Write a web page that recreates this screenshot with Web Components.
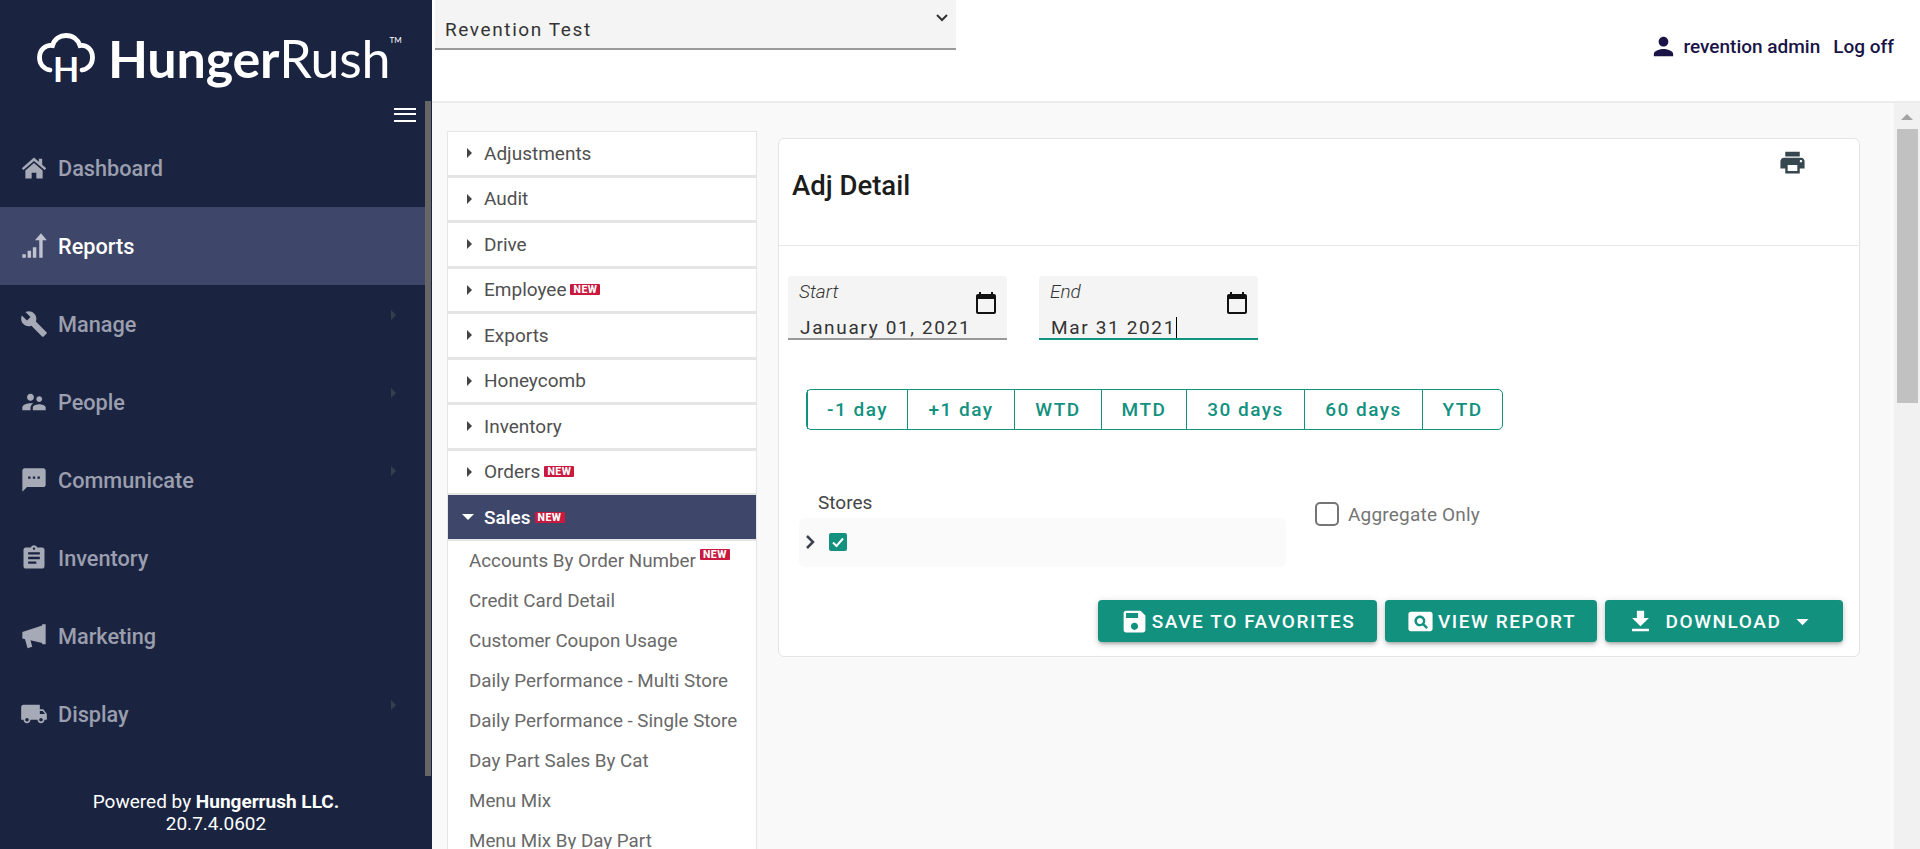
<!DOCTYPE html>
<html lang="en">
<head>
<meta charset="utf-8">
<title>Adj Detail</title>
<style>
  html, body { margin: 0; height: 100%; overflow: hidden; }
  body { display: flex; font-family: Roboto, "Liberation Sans", sans-serif; background: #f9f9f9; }
  hr-main { flex: 1; min-width: 0; }
</style>
</head>
<body>
<hr-sidebar>
  <hr-nav-item icon="home">Dashboard</hr-nav-item>
  <hr-nav-item icon="reports" active>Reports</hr-nav-item>
  <hr-nav-item icon="wrench" arrow>Manage</hr-nav-item>
  <hr-nav-item icon="people" arrow>People</hr-nav-item>
  <hr-nav-item icon="sms" arrow>Communicate</hr-nav-item>
  <hr-nav-item icon="clipboard">Inventory</hr-nav-item>
  <hr-nav-item icon="bullhorn">Marketing</hr-nav-item>
  <hr-nav-item icon="truck" arrow>Display</hr-nav-item>
</hr-sidebar>

<hr-main>
  <hr-accordion slot="menu">
    <hr-group>Adjustments</hr-group>
    <hr-group>Audit</hr-group>
    <hr-group>Drive</hr-group>
    <hr-group badge>Employee</hr-group>
    <hr-group>Exports</hr-group>
    <hr-group>Honeycomb</hr-group>
    <hr-group>Inventory</hr-group>
    <hr-group badge>Orders</hr-group>
    <hr-group badge open>Sales
      <hr-link slot="links" badge>Accounts By Order Number</hr-link>
      <hr-link slot="links">Credit Card Detail</hr-link>
      <hr-link slot="links">Customer Coupon Usage</hr-link>
      <hr-link slot="links">Daily Performance - Multi Store</hr-link>
      <hr-link slot="links">Daily Performance - Single Store</hr-link>
      <hr-link slot="links">Day Part Sales By Cat</hr-link>
      <hr-link slot="links">Menu Mix</hr-link>
      <hr-link slot="links">Menu Mix By Day Part</hr-link>
    </hr-group>
  </hr-accordion>
  <hr-report-card slot="report" heading="Adj Detail"></hr-report-card>
</hr-main>

<script>
const ICONS = {
  home: "M12 3 1.5 12.3l1.4 1.5L12 5.9l9.1 7.9 1.4-1.5L19 9.2V4h-2.8v2.7ZM4.6 14.2 12 7.8l7.4 6.4V21H14v-5h-4v5H4.6Z",
  reports: "M2 19h3v3H2Zm4.5-3h3v6h-3Zm4.5-3h3v9h-3Zm5.5-6h-3.7L18 1l5 6h-3.6v15h-2.9Z",
  wrench: "M22.7 19l-9.1-9.1c.9-2.3.4-5-1.5-6.9-2-2-5-2.4-7.4-1.3L9 6 6 9 1.6 4.7C.4 7.1.9 10.1 2.9 12.1c1.9 1.9 4.6 2.4 6.9 1.5l9.1 9.1c.4.4 1 .4 1.4 0l2.3-2.3c.5-.4.5-1.1.1-1.4z",
  people: "M16.5 12c1.38 0 2.49-1.12 2.49-2.5S17.88 7 16.5 7C15.12 7 14 8.12 14 9.5s1.12 2.5 2.5 2.5zM9 11c1.66 0 2.99-1.34 2.99-3S10.66 5 9 5C7.34 5 6 6.34 6 8s1.34 3 3 3zm7.5 3c-1.83 0-5.5.92-5.5 2.75V19h11v-2.25c0-1.83-3.67-2.75-5.5-2.75zM9 13c-2.33 0-7 1.17-7 3.5V19h7v-2.25c0-.85.33-2.34 2.37-3.47C10.5 13.1 9.66 13 9 13z",
  sms: "M20 2H4c-1.1 0-1.99.9-1.99 2L2 22l4-4h14c1.1 0 2-.9 2-2V4c0-1.1-.9-2-2-2zM9 11H7V9h2v2zm4 0h-2V9h2v2zm4 0h-2V9h2v2z",
  clipboard: "M19 3h-4.18C14.4 1.84 13.3 1 12 1c-1.3 0-2.4.84-2.82 2H5c-1.1 0-2 .9-2 2v14c0 1.1.9 2 2 2h14c1.1 0 2-.9 2-2V5c0-1.1-.9-2-2-2zm-7 0c.55 0 1 .45 1 1s-.45 1-1 1-1-.45-1-1 .45-1 1-1zm2 14H7v-2h7v2zm3-4H7v-2h10v2zm0-4H7V7h10v2z",
  bullhorn: "M2 8.5 19 3V2h3v17h-3v-1l-10-2.3 1.5 5.6-4 1.2L4.3 14.8 2 14.2Z",
  truck: "M20 8h-3V4H3c-1.1 0-2 .9-2 2v11h2c0 1.66 1.34 3 3 3s3-1.34 3-3h6c0 1.66 1.34 3 3 3s3-1.34 3-3h2v-5l-3-4zM6 18.5c-.83 0-1.5-.67-1.5-1.5s.67-1.5 1.5-1.5 1.5.67 1.5 1.5-.67 1.5-1.5 1.5zm13.5-9l1.96 2.5H17V9.5h2.5zm-1.5 9c-.83 0-1.5-.67-1.5-1.5s.67-1.5 1.5-1.5 1.5.67 1.5 1.5-.67 1.5-1.5 1.5z",
  person: "M12 12c2.21 0 4-1.79 4-4s-1.79-4-4-4-4 1.79-4 4 1.79 4 4 4zm0 2c-2.67 0-8 1.34-8 4v2h16v-2c0-2.66-5.33-4-8-4z",
  print: "M19 8H5c-1.66 0-3 1.34-3 3v6h4v4h12v-4h4v-6c0-1.66-1.34-3-3-3zm-3 11H8v-5h8v5zm3-7c-.55 0-1-.45-1-1s.45-1 1-1 1 .45 1 1-.45 1-1 1zm-1-9H6v4h12V3z",
  calendar: "M20 3h-1V1h-2v2H7V1H5v2H4c-1.1 0-2 .9-2 2v16c0 1.1.9 2 2 2h16c1.1 0 2-.9 2-2V5c0-1.1-.9-2-2-2zm0 18H4V8h16v13z",
  save: "M17 3H5c-1.11 0-2 .9-2 2v14c0 1.1.89 2 2 2h14c1.1 0 2-.9 2-2V7l-4-4zm-5 16c-1.66 0-3-1.34-3-3s1.34-3 3-3 3 1.34 3 3-1.34 3-3 3zm3-10H5V5h10v4z",
  pageview: "M11.5 9C10.12 9 9 10.12 9 11.5s1.12 2.5 2.5 2.5 2.5-1.12 2.5-2.5S12.88 9 11.5 9zM20 4H4c-1.1 0-2 .9-2 2v12c0 1.1.9 2 2 2h16c1.1 0 2-.9 2-2V6c0-1.1-.9-2-2-2zm-3.21 14.21l-2.91-2.91c-.69.44-1.51.7-2.38.7C9.01 16 7 13.99 7 11.5S9.01 7 11.5 7 16 9.01 16 11.5c0 .88-.26 1.69-.7 2.39l2.91 2.9-1.42 1.42z",
  download: "M19 9h-4V3H9v6H5l7 7 7-7zM5 18v2h14v-2H5z",
  dropdown: "M7 10l5 5 5-5z"
};

class HrIcon extends HTMLElement {
  constructor() {
    super();
    this.attachShadow({ mode: "open" });
  }

  connectedCallback() {
    const size = this.getAttribute("size") || 24;
    this.shadowRoot.innerHTML = /* html */ `
      <style>
        :host { display: inline-flex; flex: none; width: ${size}px; height: ${size}px; }
        svg { width: 100%; height: 100%; display: block; fill: currentColor; }
      </style>
      <svg viewBox="0 0 24 24"><path d="${ICONS[this.getAttribute("name")]}"/></svg>
    `;
  }
}

class HrNewBadge extends HTMLElement {
  constructor() {
    super();
    this.attachShadow({ mode: "open" });
  }

  connectedCallback() {
    this.shadowRoot.innerHTML = /* html */ `
      <style>
        :host {
          display: inline-block;
          width: 30px;
          height: 11px;
          background: #c9193f;
          border-radius: 1px;
          color: #fff;
          font: 800 10.5px/11px Roboto, sans-serif;
          letter-spacing: .5px;
          text-align: center;
        }
      </style>
      NEW
    `;
  }
}

class HrSidebar extends HTMLElement {
  constructor() {
    super();
    this.attachShadow({ mode: "open" });
  }

  connectedCallback() {
    this.shadowRoot.innerHTML = /* html */ `
      <style>
        :host {
          display: flex;
          flex-direction: column;
          flex: none;
          width: 432px;
          height: 100vh;
          background: #1a2440;
          color: #fff;
        }
        .logo { height: 101px; display: flex; padding: 33px 0 0 37px; box-sizing: border-box; }
        .logo svg { width: 58px; height: 58px; flex: none; }
        .word {
          margin-left: 13px;
          margin-top: -1px;
          font: 700 52px/52px Lato, sans-serif;
          letter-spacing: -.2px;
          white-space: nowrap;
        }
        .word span { font-weight: 400; }
        .word sup { font: 400 8px/8px Lato, sans-serif; vertical-align: 35px; letter-spacing: 0; margin-left: -1px; }
        .middle { flex: 1; display: flex; min-height: 0; }
        nav { flex: 1; min-width: 0; }
        .burger { height: 28px; display: flex; justify-content: flex-end; padding: 7px 9px 0 0; box-sizing: border-box; }
        .burger div { width: 22px; height: 14px; border-top: 2px solid #fff; border-bottom: 2px solid #fff; box-sizing: border-box; position: relative; }
        .burger div::after { content: ""; position: absolute; left: 0; right: 0; top: 3px; height: 2px; background: #fff; }
        .thumb { width: 6px; margin-right: 1px; background: #666; }
        footer { height: 73px; padding-top: 15px; box-sizing: border-box; text-align: center; font-size: 19px; line-height: 22px; }
        b { font-weight: 700; }
      </style>
      <div class="logo">
        <svg viewBox="0 0 58 58" fill="none" stroke="#fff" stroke-width="4.8" stroke-linecap="round">
          <path d="M13 37C6.5 36 2.5 31 2.5 24.5 2.5 17 8.5 11.5 15.5 12.5 17.5 6 23 2.5 29 2.5 35.5 2.5 41 6.5 43 12.5 50 11.5 55.5 17 55.5 24.5 55.5 31 51.5 36 45 37"/>
          <text x="29" y="49" text-anchor="middle" font-family="Lato, sans-serif" font-weight="700" font-size="34" fill="#fff" stroke="none">H</text>
        </svg>
        <div class="word">Hunger<span>Rush</span><sup>TM</sup></div>
      </div>
      <div class="middle">
        <nav>
          <div class="burger"><div></div></div>
          <slot></slot>
        </nav>
        <div class="thumb"></div>
      </div>
      <footer>Powered by <b>Hungerrush LLC.</b><br>20.7.4.0602</footer>
    `;
  }
}

class HrNavItem extends HTMLElement {
  constructor() {
    super();
    this.attachShadow({ mode: "open" });
  }

  connectedCallback() {
    const arrow = this.hasAttribute("arrow") ? `<i class="arrow"></i>` : "";
    this.shadowRoot.innerHTML = /* html */ `
      <style>
        :host {
          display: flex;
          align-items: center;
          height: 78px;
          padding-left: 20px;
          gap: 10px;
          color: #9a9eae;
          font: 500 21.7px Roboto, sans-serif;
          position: relative;
        }
        :host([active]) { background: #3e4769; color: #fff; }
        :host([active]) hr-icon { color: #c0c3cf; }
        hr-icon { color: #a6a9b6; }
        .arrow {
          position: absolute;
          left: 391px;
          top: 25px;
          border-left: 5px solid #333f4c;
          border-top: 5px solid transparent;
          border-bottom: 5px solid transparent;
        }
      </style>
      <hr-icon name="${this.getAttribute("icon")}" size="28"></hr-icon>
      <slot></slot>
      ${arrow}
    `;
  }
}

class HrTopbar extends HTMLElement {
  constructor() {
    super();
    this.attachShadow({ mode: "open" });
  }

  connectedCallback() {
    this.shadowRoot.innerHTML = /* html */ `
      <style>
        :host {
          display: flex;
          height: 103px;
          box-sizing: border-box;
          background: #fff;
          border-bottom: 2px solid #ececec;
          padding-left: 3px;
        }
        .select {
          width: 521px;
          height: 50px;
          box-sizing: border-box;
          background: #f4f4f4;
          border-bottom: 2px solid #999;
          padding: 19px 0 0 10px;
          color: #333;
          font-size: 19px;
          line-height: 21px;
          letter-spacing: 1.6px;
          position: relative;
        }
        .select svg { position: absolute; right: 7px; top: 11px; width: 14px; height: 14px; fill: none; stroke: #333; stroke-width: 2; }
        .user {
          margin-left: auto;
          display: flex;
          align-items: center;
          height: 92px;
          color: #1a1446;
          font-size: 19px;
          font-weight: 500;
          padding-right: 26px;
        }
        hr-icon { margin-right: 5px; }
        .off { margin-left: 13px; }
      </style>
      <div class="select">Revention Test
        <svg viewBox="0 0 14 14"><path d="M2 4l5 5 5-5"/></svg>
      </div>
      <div class="user">
        <hr-icon name="person" size="29"></hr-icon>
        <span>revention admin</span>
        <span class="off">Log off</span>
      </div>
    `;
  }
}

class HrScrollbar extends HTMLElement {
  constructor() {
    super();
    this.attachShadow({ mode: "open" });
  }

  connectedCallback() {
    this.shadowRoot.innerHTML = /* html */ `
      <style>
        :host {
          display: flex;
          flex-direction: column;
          align-items: center;
          flex: none;
          width: 26px;
          background: #f1f1f1;
          padding-top: 11px;
          box-sizing: border-box;
        }
        .up { border-left: 6px solid transparent; border-right: 6px solid transparent; border-bottom: 6px solid #a3a3a3; }
        .thumb { width: 21px; height: 274px; margin-top: 9px; background: #c1c1c1; }
      </style>
      <div class="up"></div>
      <div class="thumb"></div>
    `;
  }
}

class HrMain extends HTMLElement {
  constructor() {
    super();
    this.attachShadow({ mode: "open" });
  }

  connectedCallback() {
    this.shadowRoot.innerHTML = /* html */ `
      <style>
        :host { display: flex; flex-direction: column; height: 100vh; overflow: hidden; }
        .row { flex: 1; display: flex; min-height: 0; }
        .content {
          flex: 1;
          display: flex;
          align-items: flex-start;
          gap: 21px;
          padding: 28px 0 0 15px;
          overflow: hidden;
          min-width: 0;
        }
      </style>
      <hr-topbar></hr-topbar>
      <div class="row">
        <div class="content">
          <slot name="menu"></slot>
          <slot name="report"></slot>
        </div>
        <hr-scrollbar></hr-scrollbar>
      </div>
    `;
  }
}

class HrAccordion extends HTMLElement {
  constructor() {
    super();
    this.attachShadow({ mode: "open" });
  }

  connectedCallback() {
    this.shadowRoot.innerHTML = /* html */ `
      <style>
        :host { display: block; flex: none; width: 310px; }
      </style>
      <slot></slot>
    `;
  }
}

class HrGroup extends HTMLElement {
  constructor() {
    super();
    this.attachShadow({ mode: "open" });
  }

  connectedCallback() {
    const badge = this.hasAttribute("badge") ? `<hr-new-badge></hr-new-badge>` : "";
    this.shadowRoot.innerHTML = /* html */ `
      <style>
        :host { display: block; background: #fff; border-left: 1px solid #e5e5e5; border-right: 1px solid #e5e5e5; }
        .head {
          display: flex;
          align-items: center;
          gap: 4px;
          height: 45.5px;
          box-sizing: border-box;
          padding-left: 19px;
          border-top: 1px solid #e5e5e5;
          border-bottom: 2px solid #e5e5e5;
          color: #505050;
          font-size: 19px;
          position: relative;
        }
        .caret {
          border-left: 5px solid #444;
          border-top: 5px solid transparent;
          border-bottom: 5px solid transparent;
          margin-right: 8px;
        }
        :host([open]) .head { background: #3e4769; color: #fff; font-weight: 500; border-top-color: #3e4769; padding-left: 14px; }
        :host([open]) .caret {
          border-left: 6px solid transparent;
          border-right: 6px solid transparent;
          border-top: 6px solid #fff;
          border-bottom: 0;
          margin-right: 6px;
        }
        .links { display: none; }
        :host([open]) .links { display: block; }
      </style>
      <div class="head"><i class="caret"></i><slot></slot>${badge}</div>
      <div class="links"><slot name="links"></slot></div>
    `;
  }
}

class HrLink extends HTMLElement {
  constructor() {
    super();
    this.attachShadow({ mode: "open" });
  }

  connectedCallback() {
    const badge = this.hasAttribute("badge") ? `<hr-new-badge></hr-new-badge>` : "";
    this.shadowRoot.innerHTML = /* html */ `
      <style>
        :host {
          display: flex;
          height: 40px;
          align-items: center;
          gap: 4px;
          padding-left: 21px;
          color: #696969;
          font-size: 18.8px;
          white-space: nowrap;
        }
        hr-new-badge { align-self: flex-start; margin-top: 8px; }
      </style>
      <slot></slot>${badge}
    `;
  }
}

class HrDateField extends HTMLElement {
  constructor() {
    super();
    this.attachShadow({ mode: "open" });
  }

  connectedCallback() {
    const focused = this.hasAttribute("focused");
    this.shadowRoot.innerHTML = /* html */ `
      <style>
        :host {
          display: block;
          width: 219px;
          height: 64px;
          box-sizing: border-box;
          background: #f4f4f4;
          border-radius: 4px 4px 0 0;
          border-bottom: 2px solid ${focused ? "#12917f" : "#999"};
          position: relative;
          font-size: 19px;
        }
        .label { position: absolute; left: 11px; top: 5px; font-style: italic; font-weight: 300; color: #333; line-height: 22px; }
        .value { position: absolute; left: 12px; top: 41px; line-height: 21px; letter-spacing: 1.65px; color: #333; white-space: nowrap; }
        .value.caret { border-right: 1px solid #000; }
        hr-icon { position: absolute; right: 9px; top: 15px; color: #111; }
      </style>
      <span class="label">${this.getAttribute("label")}</span>
      <span class="value ${focused ? "caret" : ""}">${this.getAttribute("value")}</span>
      <hr-icon name="calendar"></hr-icon>
    `;
  }
}

class HrSegments extends HTMLElement {
  constructor() {
    super();
    this.attachShadow({ mode: "open" });
  }

  connectedCallback() {
    const widths = { "-1 day": 100, "+1 day": 107, "WTD": 87, "MTD": 85, "30 days": 118, "60 days": 118, "YTD": 80 };
    const cells = (this.getAttribute("items") || "").split("|")
      .map(label => `<span style="width:${widths[label]}px">${label}</span>`).join("");
    this.shadowRoot.innerHTML = /* html */ `
      <style>
        :host {
          display: inline-flex;
          height: 41px;
          box-sizing: border-box;
          border: 1px solid #12917f;
          border-radius: 5px;
          color: #12917f;
          font-size: 19px;
          font-weight: 500;
          letter-spacing: 1.5px;
        }
        span { display: flex; align-items: center; justify-content: center; box-sizing: border-box; border-left: 1px solid #12917f; }
        span:first-child { border-left: 0; }
      </style>
      ${cells}
    `;
  }
}

class HrRaisedButton extends HTMLElement {
  constructor() {
    super();
    this.attachShadow({ mode: "open" });
  }

  connectedCallback() {
    const trail = this.hasAttribute("menu") ? `<hr-icon class="trail" name="dropdown" size="29"></hr-icon>` : "";
    this.shadowRoot.innerHTML = /* html */ `
      <style>
        :host {
          display: inline-flex;
          align-items: center;
          justify-content: center;
          height: 42px;
          box-sizing: border-box;
          background: #12917f;
          border-radius: 4px;
          color: #fff;
          font-size: 19px;
          font-weight: 500;
          letter-spacing: 1.6px;
          box-shadow: 0 3px 3px -2px rgba(0,0,0,.2), 0 3px 4px rgba(0,0,0,.14), 0 1px 8px rgba(0,0,0,.12);
        }
        hr-icon { margin-right: 3px; }
        .trail { margin: 0 5px 0 -5px; }
      </style>
      <hr-icon name="${this.getAttribute("icon")}" size="29"></hr-icon>
      <slot></slot>
      ${trail}
    `;
  }
}

class HrReportCard extends HTMLElement {
  constructor() {
    super();
    this.attachShadow({ mode: "open" });
  }

  connectedCallback() {
    this.shadowRoot.innerHTML = /* html */ `
      <style>
        :host {
          display: block;
          flex: none;
          width: 1082px;
          box-sizing: border-box;
          margin-top: 7px;
          background: #fff;
          border: 1px solid #e4e4e4;
          border-radius: 6px;
        }
        header {
          height: 107px;
          box-sizing: border-box;
          border-bottom: 1px solid #e8e8e8;
          display: flex;
          justify-content: space-between;
          padding: 0 52px 0 13px;
        }
        h1 { margin: 30px 0 0; font-size: 27.5px; font-weight: 500; line-height: 34px; color: #1c1c1c; }
        header hr-icon { margin-top: 9px; color: #37474f; }
        .body { padding: 30px 16px 14px 0; }
        .dates { display: flex; gap: 32px; margin-left: 9px; }
        hr-segments { margin: 49px 0 0 27px; }
        .filters { display: flex; gap: 29px; margin: 62px 0 0 20px; }
        .stores { width: 487px; }
        .stores label { display: block; padding-left: 19px; height: 26px; font-size: 19px; line-height: 22px; color: #444; }
        .tree { height: 49px; background: #fafafa; border-radius: 6px; display: flex; align-items: flex-start; padding: 15px 0 0 6px; box-sizing: border-box; }
        .tree svg { width: 12px; height: 16px; fill: none; stroke: #3c4050; stroke-width: 2.5; margin-top: 1px; }
        .check { width: 18px; height: 18px; margin-left: 12px; background: #12917f; border-radius: 2px; display: flex; }
        .check svg { width: 18px; height: 18px; margin: 0; stroke: #fff; stroke-width: 2; }
        .aggregate { display: flex; align-items: center; gap: 9px; height: 24px; margin-top: 10px; color: #757575; font-size: 19px; letter-spacing: .2px; }
        .box { width: 24px; height: 24px; box-sizing: border-box; border: 2px solid #757575; border-radius: 5px; }
        .actions { display: flex; justify-content: flex-end; gap: 8px; margin-top: 33px; }
      </style>
      <header>
        <h1>${this.getAttribute("heading")}</h1>
        <hr-icon name="print" size="29"></hr-icon>
      </header>
      <div class="body">
        <div class="dates">
          <hr-date-field label="Start" value="January 01, 2021"></hr-date-field>
          <hr-date-field label="End" value="Mar 31 2021" focused></hr-date-field>
        </div>
        <hr-segments items="-1 day|+1 day|WTD|MTD|30 days|60 days|YTD"></hr-segments>
        <div class="filters">
          <div class="stores">
            <label>Stores</label>
            <div class="tree">
              <svg viewBox="0 0 12 16"><path d="M2 2l6 6-6 6"/></svg>
              <div class="check"><svg viewBox="0 0 18 18"><path d="M4 9.5l3.5 3.5L14 5.5"/></svg></div>
            </div>
          </div>
          <div class="aggregate"><span class="box"></span>Aggregate Only</div>
        </div>
        <div class="actions">
          <hr-raised-button icon="save" style="width:279px">SAVE TO FAVORITES</hr-raised-button>
          <hr-raised-button icon="pageview" style="width:212px">VIEW REPORT</hr-raised-button>
          <hr-raised-button icon="download" menu style="width:238px"><span style="margin:0 11px 0 7px">DOWNLOAD</span></hr-raised-button>
        </div>
      </div>
    `;
  }
}

customElements.define("hr-icon", HrIcon);
customElements.define("hr-new-badge", HrNewBadge);
customElements.define("hr-sidebar", HrSidebar);
customElements.define("hr-nav-item", HrNavItem);
customElements.define("hr-topbar", HrTopbar);
customElements.define("hr-scrollbar", HrScrollbar);
customElements.define("hr-main", HrMain);
customElements.define("hr-accordion", HrAccordion);
customElements.define("hr-group", HrGroup);
customElements.define("hr-link", HrLink);
customElements.define("hr-date-field", HrDateField);
customElements.define("hr-segments", HrSegments);
customElements.define("hr-raised-button", HrRaisedButton);
customElements.define("hr-report-card", HrReportCard);
</script>
</body>
</html>
